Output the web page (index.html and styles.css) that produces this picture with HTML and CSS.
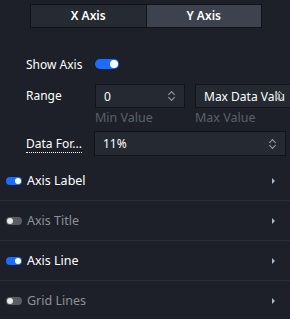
FILE: index.html
```html
<!DOCTYPE html>
<html lang="en">
<head>
    <meta charset="UTF-8">
    <title>Axis Settings</title>
    <link rel="stylesheet" href="styles.css">
</head>
<body>
    <div class="tabs">
        <div class="tab">X Axis</div>
        <div class="tab active">Y Axis</div>
    </div>

    <div class="form">
        <div class="row">
            <div class="label">Show Axis</div>
            <span class="switch on"></span>
        </div>
        <div class="row range">
            <div class="label">Range</div>
            <div class="pair">
                <div class="field">
                    <div class="box"><span>0</span><i class="spin"></i></div>
                    <div class="hint">Min Value</div>
                </div>
                <div class="field wide">
                    <div class="box"><span>Max Data Valu</span><i class="spin"></i></div>
                    <div class="hint">Max Value</div>
                </div>
            </div>
        </div>
        <div class="row">
            <div class="label"><span class="dotted">Data For...</span></div>
            <div class="box full"><span>11%</span><i class="spin"></i></div>
        </div>
    </div>

    <div class="sections">
        <div class="section">
            <span class="switch small on"></span>
            <span class="name">Axis Label</span>
            <span class="arrow"></span>
        </div>
        <div class="section off">
            <span class="switch small"></span>
            <span class="name">Axis Title</span>
            <span class="arrow"></span>
        </div>
        <div class="section">
            <span class="switch small on"></span>
            <span class="name">Axis Line</span>
            <span class="arrow"></span>
        </div>
        <div class="section off">
            <span class="switch small"></span>
            <span class="name">Grid Lines</span>
            <span class="arrow"></span>
        </div>
    </div>
</body>
</html>
```

FILE: styles.css
```css
body {
    margin: 0;
    background: #1d2028;
    color: #fff;
    font-family: "Noto Sans", "Open Sans", sans-serif;
    font-size: 12px;
    overflow: hidden;
    width: 290px;
}
.tabs {
    display: flex;
    margin: 4px 0 0 30px;
    width: 232px;
    border: 1px solid #111318;
    box-sizing: border-box;
}
.tab {
    flex: 1;
    height: 22px;
    line-height: 22px;
    text-align: center;
    background: #262a33;
    font-weight: 600;
}
.tab.active {
    background: #3d424e;
    border-left: 1px solid #111318;
}
.form {
    padding: 0 0 0 26px;
}
.row {
    display: flex;
    align-items: center;
}
.row:first-child {
    height: 20px;
    margin-top: 26px;
}
.label {
    width: 69px;
    flex: none;
}
.range {
    margin-top: 10px;
    align-items: flex-start;
}
.range .label {
    line-height: 24px;
}
.pair {
    display: flex;
    gap: 10px;
}
.field {
    width: 90px;
}
.field.wide {
    width: 95px;
}
.box {
    height: 22px;
    border: 1px solid #111318;
    background: #252931;
    display: flex;
    align-items: center;
    padding: 0 8px;
    position: relative;
    white-space: nowrap;
    overflow: hidden;
}
.box span {
    flex: 1;
    overflow: hidden;
}
.wide .box {
    border-right: none;
    padding-right: 0;
}
.wide .spin {
    position: absolute;
    right: 6px;
}
.box.full {
    width: 174px;
    height: 23px;
    margin-left: -1px;
}
.hint {
    color: #5b606b;
    line-height: 20px;
    font-size: 12.5px;
}
.row:last-child {
    margin-top: 3px;
}
.spin {
    width: 8px;
    height: 12px;
    flex: none;
    position: relative;
}
.spin::before, .spin::after {
    content: "";
    position: absolute;
    left: 1px;
    width: 4px;
    height: 4px;
    border-left: 1.5px solid #9aa0aa;
    border-top: 1.5px solid #9aa0aa;
}
.spin::before {
    top: 2px;
    transform: rotate(45deg);
}
.spin::after {
    top: 5px;
    transform: rotate(225deg);
}
.dotted {
    border-bottom: 1px dotted #fff;
}
.switch {
    display: inline-block;
    width: 24px;
    height: 10px;
    border-radius: 5px;
    background: #5a5d63;
    position: relative;
}
.switch::after {
    content: "";
    position: absolute;
    top: 1px;
    left: 1px;
    width: 8px;
    height: 8px;
    border-radius: 50%;
    background: #fff;
}
.switch.on {
    background: #1a6dff;
}
.switch.on::after {
    left: auto;
    right: 1px;
}
.switch.small {
    width: 16px;
    height: 8px;
    border-radius: 4px;
    flex: none;
}
.switch.small::after {
    width: 6px;
    height: 6px;
}
.sections {
    margin-top: 5px;
}
.section {
    display: flex;
    align-items: center;
    height: 39px;
    border-bottom: 1px solid #2b2f38;
    padding-left: 6px;
}
.section .name {
    flex: 1;
    margin-left: 5px;
    font-size: 12.5px;
}
.section.off .name {
    color: #8d9097;
}
.section.off .switch::after {
    background: #e8e8e8;
}
.arrow {
    width: 0;
    height: 0;
    border-left: 3px solid #a7bad0;
    border-top: 3px solid transparent;
    border-bottom: 3px solid transparent;
    margin-right: 15px;
}
.section:last-child {
    border-bottom: none;
}
```
